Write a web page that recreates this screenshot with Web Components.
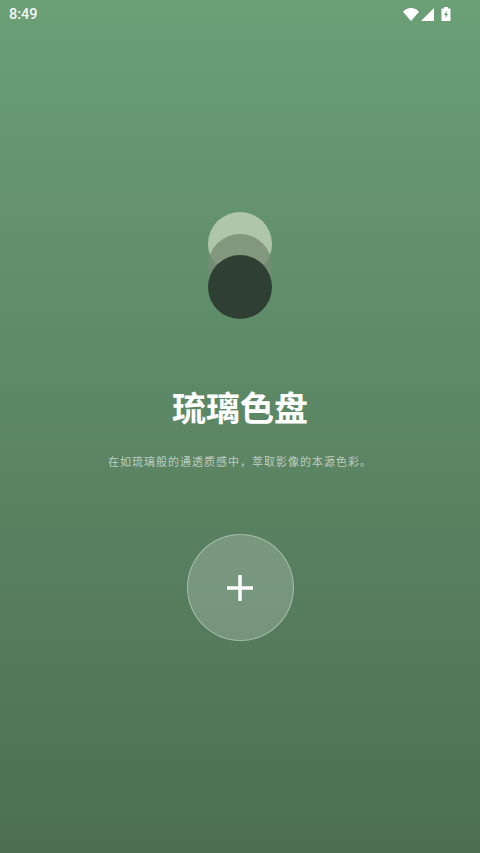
<!DOCTYPE html>
<html lang="zh"><head><meta charset="utf-8"><style>
html,body{margin:0;padding:0;height:100%}
body{font-family:Roboto,"Noto Sans CJK SC",sans-serif}
</style></head><body>
<palette-app>
<status-bar slot="status"></status-bar>
<orb-stack></orb-stack>
<span slot="title">琉璃色盘</span>
<span slot="sub">在如琉璃般的通透质感中，萃取影像的本源色彩。</span>
<add-button slot="button"></add-button>
</palette-app>
<script>
function def(name,html){customElements.define(name,class extends HTMLElement{constructor(){super();this.attachShadow({mode:'open'}).innerHTML=html}})}
def('status-bar',`<style>
:host{display:flex;align-items:center;justify-content:space-between;height:28px;padding:0 29px 0 9px;box-sizing:border-box;color:#f4f8f3;font:500 14.500px Roboto,sans-serif}
.i{display:flex;align-items:center}svg{display:block}
</style><span>8:49</span><div class="i">
<svg width="16" height="13" viewBox="0 0 16 13"><path d="M0 3.800C2 1.500 4.800 0 8 0s6 1.500 8 3.800L8 13z" fill="#fff"/></svg>
<svg width="13" height="13" viewBox="0 0 13 13" style="margin-left:2px"><path d="M13 0v13H0z" fill="#fff"/></svg>
<svg width="10" height="14" viewBox="0 0 10 14" style="margin-left:7px"><path fill-rule="evenodd" d="M3 0h4v1.500h2.500V14H.5V1.500H3zM5.700 3.500 3 8h1.700v3L7 6.800H5.400z" fill="#fff"/></svg>
</div>`);
def('orb-stack',`<style>
:host{display:flex;flex-direction:column;align-items:center}
i{display:block;width:64px;height:64px;border-radius:50%}
i+i{margin-top:-42.500px}
.a{background:#afc7a8}.b{background:rgba(120,140,116,.82)}.c{background:#303f34}
</style><i class="a"></i><i class="b"></i><i class="c"></i>`);
def('add-button',`<style>
:host{display:flex;align-items:center;justify-content:center;box-sizing:border-box;width:107px;height:107px;border-radius:50%;background:rgba(255,255,255,.2);border:1.500px solid rgba(255,255,255,.35)}
svg{display:block}
</style><svg width="26" height="26" viewBox="0 0 26 26"><path d="M13 0v26M0 13h26" stroke="#fff" stroke-width="3.500"/></svg>`);
def('palette-app',`<style>
:host{display:flex;flex-direction:column;height:853px;background:linear-gradient(180deg,#6b9f76 0%,#4d6e53 100%);overflow:hidden}
main{display:flex;flex-direction:column;align-items:center;padding-top:184px}
h1{margin:66px 0 0;font:700 34px/44px "Noto Sans CJK SC",sans-serif;color:#fff;letter-spacing:0}
p{margin:24px 0 0;font:400 11px/16px "Noto Sans CJK SC",sans-serif;letter-spacing:1px;color:rgba(255,255,255,.6)}
.btn{display:block;margin-top:65px}
</style><slot name="status"></slot><main><slot></slot><h1><slot name="title"></slot></h1><p><slot name="sub"></slot></p><div class="btn"><slot name="button"></slot></div></main>`);
</script>
</body></html>
